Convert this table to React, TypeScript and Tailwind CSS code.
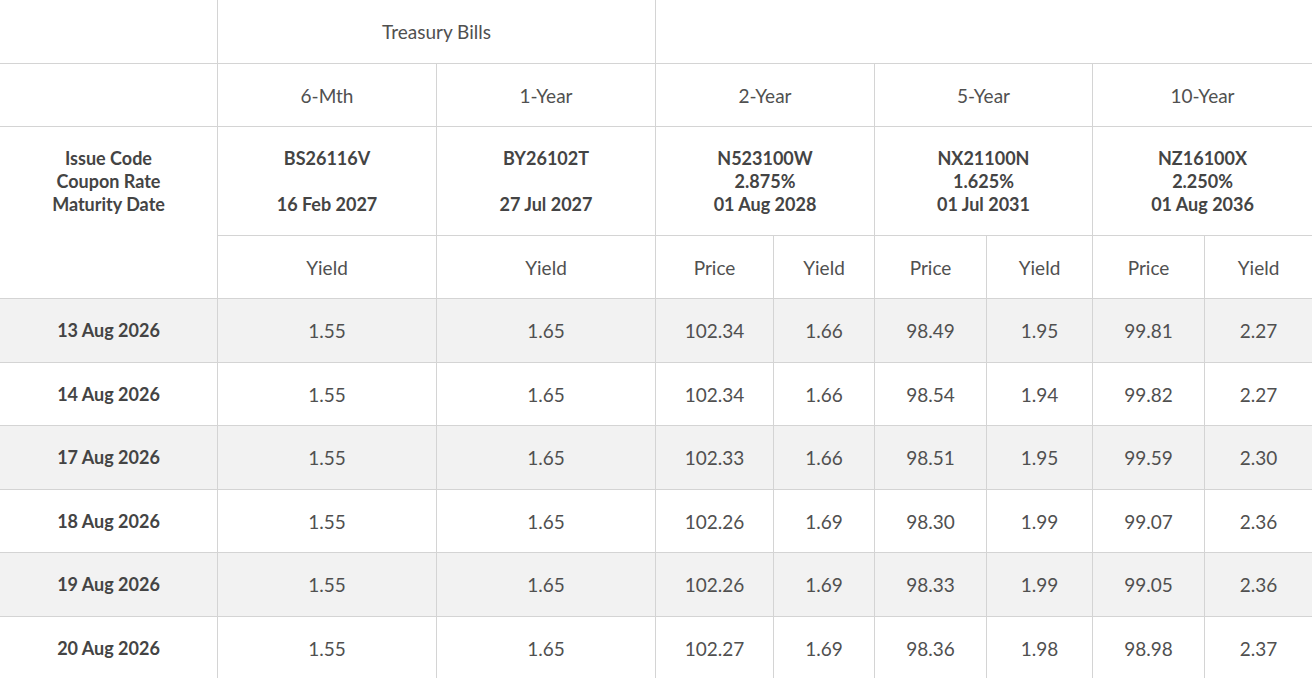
import React from "react";

const rows: { date: string; v: string[] }[] = [
  { date: "13 Aug 2026", v: ["1.55", "1.65", "102.34", "1.66", "98.49", "1.95", "99.81", "2.27"] },
  { date: "14 Aug 2026", v: ["1.55", "1.65", "102.34", "1.66", "98.54", "1.94", "99.82", "2.27"] },
  { date: "17 Aug 2026", v: ["1.55", "1.65", "102.33", "1.66", "98.51", "1.95", "99.59", "2.30"] },
  { date: "18 Aug 2026", v: ["1.55", "1.65", "102.26", "1.69", "98.30", "1.99", "99.07", "2.36"] },
  { date: "19 Aug 2026", v: ["1.55", "1.65", "102.26", "1.69", "98.33", "1.99", "99.05", "2.36"] },
  { date: "20 Aug 2026", v: ["1.55", "1.65", "102.27", "1.69", "98.36", "1.98", "98.98", "2.37"] },
];

const widths = [217, 219, 219, 118, 101, 112, 106, 112, 108];

const cell = "border border-[#d4d4d4] text-center align-middle p-0";
const bold = "font-bold text-[18px] text-[#444]";

export default function App() {
  return (
    <div
      className="w-[1312px] h-[678px] overflow-hidden bg-white text-[#505050]"
      style={{ fontFamily: "Lato, 'Open Sans', sans-serif" }}
    >
      <table className="table-fixed border-collapse w-[1314px] ml-[-1px] mt-[-1px] text-[19px] leading-[23px]">
        <colgroup>
          {widths.map((w, i) => (
            <col key={i} style={{ width: w + (i === 0 ? 1 : 0) }} />
          ))}
        </colgroup>
        <tbody>
          <tr className="h-[64px]">
            <td className={cell}></td>
            <td className={cell} colSpan={2}>Treasury Bills</td>
            <td className={cell} colSpan={6}></td>
          </tr>
          <tr className="h-[63px]">
            <td className={cell}></td>
            <td className={cell}>6-Mth</td>
            <td className={cell}>1-Year</td>
            <td className={cell} colSpan={2}>2-Year</td>
            <td className={cell} colSpan={2}>5-Year</td>
            <td className={cell} colSpan={2}>10-Year</td>
          </tr>
          <tr className="h-[109px]">
            <td className={`${cell} ${bold} !align-top pt-[20px]`} rowSpan={2}>
              Issue Code
              <br />
              Coupon Rate
              <br />
              Maturity Date
            </td>
            <td className={`${cell} ${bold}`}>
              BS26116V
              <br />
              <br />
              16 Feb 2027
            </td>
            <td className={`${cell} ${bold}`}>
              BY26102T
              <br />
              <br />
              27 Jul 2027
            </td>
            <td className={`${cell} ${bold}`} colSpan={2}>
              N523100W
              <br />
              2.875%
              <br />
              01 Aug 2028
            </td>
            <td className={`${cell} ${bold}`} colSpan={2}>
              NX21100N
              <br />
              1.625%
              <br />
              01 Jul 2031
            </td>
            <td className={`${cell} ${bold}`} colSpan={2}>
              NZ16100X
              <br />
              2.250%
              <br />
              01 Aug 2036
            </td>
          </tr>
          <tr className="h-[63px]">
            <td className={cell}>Yield</td>
            <td className={cell}>Yield</td>
            <td className={cell}>Price</td>
            <td className={cell}>Yield</td>
            <td className={cell}>Price</td>
            <td className={cell}>Yield</td>
            <td className={cell}>Price</td>
            <td className={cell}>Yield</td>
          </tr>
          {rows.map((r, i) => (
            <tr key={r.date} className={`${i % 2 === 0 ? "h-[64px] bg-[#f2f2f2]" : "h-[63px] bg-white"}`}>
              <td className={`${cell} ${bold}`}>{r.date}</td>
              {r.v.map((x, j) => (
                <td key={j} className={cell}>
                  {x}
                </td>
              ))}
            </tr>
          ))}
        </tbody>
      </table>
    </div>
  );
}
